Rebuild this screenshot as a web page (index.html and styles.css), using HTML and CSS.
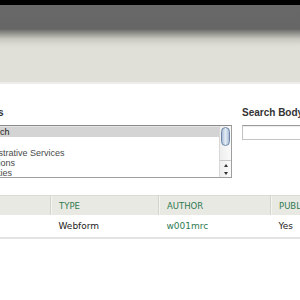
FILE: index.html
```html
<!DOCTYPE html>
<html>
<head>
<meta charset="utf-8">
<link rel="stylesheet" href="styles.css">
</head>
<body>
<div class="masthead"></div>
<div class="page">
  <form class="filters">
    <div class="field field-cat">
      <label class="field-label">Categories</label>
      <div class="listbox">
        <ul class="options">
          <li class="opt selected">Research</li>
          <li class="opt">&nbsp;</li>
          <li class="opt">Administrative Services</li>
          <li class="opt">Operations</li>
          <li class="opt">Properties</li>
        </ul>
        <div class="scrollbar">
          <div class="thumb"></div>
          <div class="arrows">
            <span class="arr up"></span>
            <span class="arr down"></span>
          </div>
        </div>
      </div>
    </div>
    <div class="field field-search">
      <label class="field-label">Search Body</label>
      <div class="textbox"></div>
    </div>
  </form>
  <table class="results">
    <thead>
      <tr>
        <th class="c-title">TITLE</th>
        <th class="c-type">TYPE</th>
        <th class="c-author">AUTHOR</th>
        <th class="c-pub">PUBLISHED</th>
      </tr>
    </thead>
    <tbody>
      <tr>
        <td class="c-title">&nbsp;</td>
        <td class="c-type">Webform</td>
        <td class="c-author"><a class="user">w001mrc</a></td>
        <td class="c-pub">Yes</td>
      </tr>
    </tbody>
  </table>
</div>
</body>
</html>
```

FILE: styles.css
```css
html, body {
  margin: 0;
  padding: 0;
  background: #fff;
  overflow: hidden;
}
body {
  width: 300px;
  height: 300px;
  font-family: "DejaVu Sans", Verdana, sans-serif;
  color: #333;
}
.masthead {
  height: 84px;
  background: linear-gradient(to bottom,
    #000 0px, #000 5px,
    #686868 5px, #666 29px,
    #8f8f8a 33px, #c9c9c2 39px, #dcdcd5 45px, #e0e0d9 48px,
    #e0e0d9 82px, #ececea 82px, #ececea 84px);
}
.page {
  margin-left: -120px;
  width: 520px;
}
.filters {
  display: flex;
  gap: 10px;
  margin: 0;
  padding-top: 23px;
}
.field {
  display: flex;
  flex-direction: column;
  gap: 7px;
}
.field-cat {
  width: 352px;
}
.field-label {
  font-family: "Liberation Sans", Arial, sans-serif;
  font-weight: bold;
  font-size: 10px;
  line-height: 11px;
  color: #333;
  padding-left: 72px;
  white-space: nowrap;
}
.field-search .field-label {
  padding-left: 0;
}
.listbox {
  height: 51px;
  border: 1px solid #9e9e9e;
  border-top-color: #8a8a8a;
  display: flex;
  background: #fff;
  box-shadow: inset 0 1px 1px rgba(0,0,0,0.12);
}
.options {
  list-style: none;
  margin: 1px 0 0 0;
  padding: 0;
  flex: 1;
  font-family: "Liberation Sans", Arial, sans-serif;
  font-size: 9px;
  color: #4a4a4a;
}
.opt {
  height: 10.3px;
  line-height: 10px;
  padding-left: 90px;
  white-space: nowrap;
}
.opt.selected {
  background: #d4d4d4;
  color: #222;
}
.scrollbar {
  width: 11px;
  border-left: 1px solid #d8d8d8;
  background: linear-gradient(to right, #eee, #fafafa);
  display: flex;
  flex-direction: column;
  justify-content: space-between;
}
.thumb {
  margin: 1px 1px 0 1px;
  height: 17px;
  border-radius: 5px;
  border: 1px solid #6f88a8;
  background: linear-gradient(to right, #a9bdd6, #e4ecf6 50%, #a9bdd6);
}
.arrows {
  display: flex;
  flex-direction: column;
  border-top: 1px solid #c8c8c8;
}
.arr {
  height: 8px;
  display: flex;
  align-items: center;
  justify-content: center;
}
.arr::before {
  content: "";
  border-left: 2px solid transparent;
  border-right: 2px solid transparent;
}
.arr.up::before {
  border-bottom: 3px solid #333;
}
.arr.down::before {
  border-top: 3px solid #333;
}
.field-search {
  width: 150px;
}
.textbox {
  height: 13px;
  border: 1px solid #c4c4c4;
  border-top-color: #9a9a9a;
  background: #fff;
  box-shadow: inset 0 1px 1px rgba(0,0,0,0.08);
}
.results {
  margin-top: 17px;
  border-collapse: collapse;
  width: 520px;
  font-size: 9px;
}
.results thead tr {
  background: #e9e9e3;
  border-top: 1px solid #dcdcd6;
}
.results th {
  text-align: left;
  font-weight: normal;
  font-size: 8.5px;
  color: #2f7a52;
  height: 19px;
  padding: 0 0 0 8px;
  border-left: 1px solid #d4d4ce;
  box-shadow: inset 1px 0 0 #f4f4f0;
}
.results th.c-title {
  border-left: none;
  box-shadow: none;
}
.results td {
  height: 22px;
  padding: 0 0 0 8px;
  color: #222;
}
.results tbody tr {
  border-bottom: 2px solid #e3e3e3;
}
.c-title { width: 162px; }
.c-type { width: 99px; }
.c-author { width: 103px; }
.user {
  color: #2f7a52;
}
```
